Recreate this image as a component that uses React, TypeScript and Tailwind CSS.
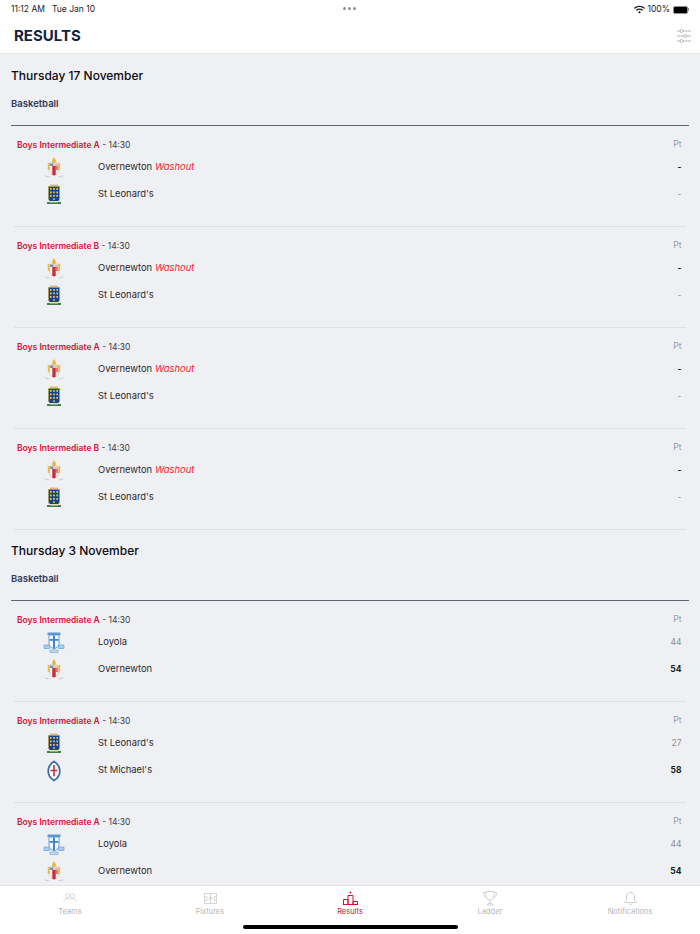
import { FaWifi } from "react-icons/fa";

type Team = "overnewton" | "leonards" | "loyola" | "michaels";

type Match = {
  grade: string;
  home: Team;
  away: Team;
  homeScore: string;
  awayScore: string;
  washout?: boolean;
};

const teamNames: Record<Team, string> = {
  overnewton: "Overnewton",
  leonards: "St Leonard's",
  loyola: "Loyola",
  michaels: "St Michael's",
};

const washouts: Match[] = [
  { grade: "Boys Intermediate A", home: "overnewton", away: "leonards", homeScore: "-", awayScore: "-", washout: true },
  { grade: "Boys Intermediate B", home: "overnewton", away: "leonards", homeScore: "-", awayScore: "-", washout: true },
  { grade: "Boys Intermediate A", home: "overnewton", away: "leonards", homeScore: "-", awayScore: "-", washout: true },
  { grade: "Boys Intermediate B", home: "overnewton", away: "leonards", homeScore: "-", awayScore: "-", washout: true },
];

const played: Match[] = [
  { grade: "Boys Intermediate A", home: "loyola", away: "overnewton", homeScore: "44", awayScore: "54" },
  { grade: "Boys Intermediate A", home: "leonards", away: "michaels", homeScore: "27", awayScore: "58" },
  { grade: "Boys Intermediate A", home: "loyola", away: "overnewton", homeScore: "44", awayScore: "54" },
];

// School crests
const Crest = ({ team }: { team: Team }) => {
  if (team === "overnewton") {
    return (
      <svg width="22" height="22" viewBox="0 0 22 22">
        <path d="M11 0l2 3.500-.8 3h-2.400l-.8-3z" fill="#e3b93c" />
        <path d="M4.500 6.500c1-1 2.500-.5 2.500 1v6c-1.500 0-2.500-1-2.300-2.500l.3-1.500zM17.500 6.500c-1-1-2.500-.5-2.500 1v6c1.500 0 2.500-1 2.300-2.500l-.3-1.500z" fill="#e3bd4a" />
        <path d="M6.500 6h9v8c0 2-2.500 3.300-4.500 4.300-2-1-4.500-2.300-4.500-4.300z" fill="#f6f3ec" stroke="#c9b26a" strokeWidth="0.5" />
        <path d="M9.300 9h3.400v8.800l-1.700.6-1.700-.6z" fill="#cb2a40" />
        <path d="M7 6.500h3.500v2.500h-3.500z" fill="#7f8bb0" />
        <path d="M11.500 6.500h3.500v2.500h-3.500z" fill="#e8b9a8" />
        <path d="M12.700 9h2.300v4h-2.300z" fill="#cb2a40" opacity="0.6" />
        <path d="M1 18c2.500 1 4.500 1.400 6 1l-1 1.300c-2 .3-4-.4-5-2.300zM21 18c-2.500 1-4.500 1.400-6 1l1 1.300c2 .3 4-.4 5-2.300z" fill="#d0d2d8" />
      </svg>
    );
  }
  if (team === "leonards") {
    return (
      <svg width="22" height="22" viewBox="0 0 22 22">
        <path d="M7 0.500h8v2h-8z" fill="#e2b48a" />
        <path d="M5.500 2.500h11v12c0 1.500-1 2.500-2 3h-7c-1-.5-2-1.500-2-3z" fill="#17448c" stroke="#a89a4c" strokeWidth="0.8" />
        <g fill="#e8cf4f">
          <rect x="7" y="4" width="1.600" height="1.800" />
          <rect x="10.200" y="4" width="1.600" height="1.800" />
          <rect x="13.400" y="4" width="1.600" height="1.800" />
          <rect x="7" y="7.500" width="1.600" height="1.800" />
          <rect x="10.200" y="7.500" width="1.600" height="1.800" />
          <rect x="13.400" y="7.500" width="1.600" height="1.800" />
          <rect x="7" y="11" width="1.600" height="1.800" />
          <rect x="10.200" y="11" width="1.600" height="1.800" />
          <rect x="13.400" y="11" width="1.600" height="1.800" />
          <rect x="10.200" y="14.300" width="1.600" height="1.600" />
        </g>
        <path d="M4 18h14v2h-14z" fill="#3f7d4a" />
        <path d="M7 17h8v1.500h-8z" fill="#e6dfc8" />
      </svg>
    );
  }
  if (team === "loyola") {
    return (
      <svg width="22" height="22" viewBox="0 0 22 22">
        <path d="M4.500 0.500h13v2.500h-13z" fill="#5b9bd5" />
        <path d="M6 3h10v9c0 2-2 3.500-5 5-3-1.500-5-3-5-5z" fill="#f4f7fb" stroke="#4a8ccc" strokeWidth="0.8" />
        <path d="M10 3.500h2v13h-2zM6.500 7h9v1.800h-9z" fill="#3f86cc" />
        <path d="M1 13h5.500v3.500h-5.500zM15.500 13h5.500v3.500h-5.500z" fill="#a9cdec" stroke="#5b9bd5" strokeWidth="0.6" />
        <path d="M7 18h8v2.500h-8z" fill="#c3dbf1" stroke="#5b9bd5" strokeWidth="0.5" />
      </svg>
    );
  }
  return (
    <svg width="22" height="22" viewBox="0 0 22 22">
      <path d="M11 1.500c4 2.500 5.800 5.800 5.800 9.500s-1.800 7-5.800 9.500c-4-2.500-5.800-5.800-5.800-9.500s1.800-7 5.800-9.500z" fill="#fff" stroke="#3d6ea8" strokeWidth="1.800" />
      <path d="M10.200 5h1.600v4.700h2.700v1.600h-2.700v5h-1.600v-5h-2.700v-1.600h2.700z" fill="#c8283c" />
    </svg>
  );
};

const TeamRow = ({ team, score, washout, strong }: { team: Team; score: string; washout?: boolean; strong: boolean }) => (
  <div className="flex h-[27px] items-center">
    <div className="mr-[4px] flex w-[80px] justify-center">
      <Crest team={team} />
    </div>
    <div className="flex-1 text-[9.4px] text-[#2a2a2e]">
      {teamNames[team]}
      {washout && <span className="ml-[3px] italic text-[#f5222d]">Washout</span>}
    </div>
    <div className={`w-[30px] pr-[4.500px] text-right text-[8.500px] ${strong ? "font-bold text-[#1c1c1e]" : "text-[#8e8e93]"}`}>
      {score}
    </div>
  </div>
);

const MatchCard = ({ match }: { match: Match }) => {
  const homeWon = Number(match.homeScore) > Number(match.awayScore);
  return (
    <div className="mx-[3px] h-[101px] border-b border-[#dfe0e4]">
      <div className="flex h-[28px] items-end justify-between pb-[2.500px] pl-[3px]">
        <div className="text-[8.500px] text-[#3c3c43]">
          <span className="font-semibold text-[#d7123a]">{match.grade}</span> - 14:30
        </div>
        <div className="pb-[1px] pr-[4.500px] text-[8.500px] text-[#9a9aa0]">Pt</div>
      </div>
      <TeamRow team={match.home} score={match.homeScore} washout={match.washout} strong={match.washout ? true : homeWon} />
      <TeamRow team={match.away} score={match.awayScore} strong={match.washout ? false : !homeWon} />
    </div>
  );
};

const Section = ({ date, matches }: { date: string; matches: Match[] }) => (
  <section className="px-[11px]">
    <h2 className="h-[37px] pt-[12px] text-[12px] font-medium text-[#0b0b0f]">{date}</h2>
    <h3 className="flex h-[24px] items-center text-[9.500px] font-semibold text-[#2d3a58]">Basketball</h3>
    <div className="mt-[9px] border-t border-[#5d6574]" />
    {matches.map((m, i) => (
      <MatchCard key={i} match={m} />
    ))}
  </section>
);

const TabIcon = ({ name }: { name: string }) => {
  if (name === "Teams") {
    return (
      <svg width="14" height="10" viewBox="0 0 16 12" fill="none" stroke="#c6c7cb" strokeWidth="0.8">
        <circle cx="5" cy="3.500" r="2.600" />
        <circle cx="11" cy="3.500" r="2.600" />
        <path d="M0.500 11c.5-3 2-4.500 4.500-4.500 1.500 0 2.500.5 3 1.500M8 8c.5-1 1.500-1.500 3-1.500 2.500 0 4 1.500 4.500 4.500" />
      </svg>
    );
  }
  if (name === "Fixtures") {
    return (
      <svg width="13" height="11" viewBox="0 0 14 12" fill="none" stroke="#c6c7cb" strokeWidth="0.8">
        <rect x="0.500" y="0.500" width="13" height="11" />
        <path d="M7 0.500v11M0.500 4h2.500v4h-2.500M13.500 4h-2.500v4h2.500" />
        <circle cx="7" cy="6" r="1.500" />
      </svg>
    );
  }
  if (name === "Results") {
    return (
      <svg width="15" height="14" viewBox="0 0 15 14" fill="none" stroke="currentColor" strokeWidth="1">
        <path d="M0.500 13.500v-5h4.500v5M5 13.500v-9h5v9M10 13.500v-3h4.500v3M0 13.500h15" />
        <circle cx="7.500" cy="1.500" r="1" fill="currentColor" stroke="none" />
      </svg>
    );
  }
  if (name === "Ladder") {
    return (
      <svg width="14" height="15" viewBox="0 0 14 15" fill="none" stroke="#c6c7cb" strokeWidth="0.8">
        <path d="M3 0.500h8v4.500c0 2.500-2 4-4 4s-4-1.500-4-4zM3 1.500h-2.500c0 3 1 4.500 3 5M11 1.500h2.500c0 3-1 4.500-3 5M7 9v3.500M4 14h6l-1-1.500h-4z" />
      </svg>
    );
  }
  return (
    <svg width="13" height="15" viewBox="0 0 13 15" fill="none" stroke="#c6c7cb" strokeWidth="0.8">
      <path d="M6.500 1.500c-2.500 0-4 2-4 4.500v3l-2 2.500h12l-2-2.500v-3c0-2.500-1.500-4.500-4-4.500zM5 12.500c.3 1 .8 1.500 1.500 1.500s1.200-.5 1.500-1.500M6.500 0.500v1" />
    </svg>
  );
};

const tabs = ["Teams", "Fixtures", "Results", "Ladder", "Notifications"];

const App = () => {
  return (
    <div className="flex h-[934px] w-[700px] flex-col overflow-hidden bg-white font-['Inter',sans-serif]">
      {/* status bar */}
      <div className="relative flex h-[16px] items-end justify-between pl-[11px] pr-[11px] text-[8.500px] text-[#1c1c1e]">
        <div className="flex gap-[7px]">
          <span>11:12 AM</span>
          <span>Tue Jan 10</span>
        </div>
        <div className="absolute left-[343px] top-[7px] flex gap-[2px]">
          <span className="h-[3px] w-[3px] rounded-full bg-[#8e8e93]" />
          <span className="h-[3px] w-[3px] rounded-full bg-[#8e8e93]" />
          <span className="h-[3px] w-[3px] rounded-full bg-[#8e8e93]" />
        </div>
        <div className="flex items-center gap-[2px]">
          <FaWifi size={11} />
          <span>100%</span>
          <div className="ml-[1px] flex items-center">
            <div className="h-[8px] w-[15px] rounded-[2px] border border-[#8e8e93] bg-black" />
            <div className="h-[3px] w-[1px] bg-[#8e8e93]" />
          </div>
        </div>
      </div>

      {/* header */}
      <header className="flex h-[38px] shrink-0 items-center justify-between border-b border-[#e3e4e8] pl-[14px] pr-[9px] pt-[3px]">
        <h1 className="text-[15px] font-bold text-[#14233f]">RESULTS</h1>
        <svg width="14" height="14" viewBox="0 0 14 14" fill="none" stroke="#a2a4aa" strokeWidth="0.8">
          <path d="M0 2h3M6 2h8M0 7h7M10 7h4M0 12h3M6 12h8" />
          <circle cx="4.500" cy="2" r="1.500" />
          <circle cx="8.500" cy="7" r="1.500" />
          <circle cx="4.500" cy="12" r="1.500" />
        </svg>
      </header>

      <main className="min-h-0 flex-1 overflow-hidden bg-[#eff0f4] pt-[1px]">
        <Section date="Thursday 17 November" matches={washouts} />
        <Section date="Thursday 3 November" matches={played} />
      </main>

      {/* tab bar */}
      <nav className="relative h-[49px] shrink-0 border-t border-[#e3e4e8] bg-white">
        <div className="grid grid-cols-5 pt-[5px]">
          {tabs.map((t) => (
            <div key={t} className={`flex h-[26px] flex-col items-center justify-between text-[7.500px] ${t === "Results" ? "text-[#d7123a]" : "text-[#b4b5ba]"}`}>
              <div className="flex h-[15px] items-center">
                <TabIcon name={t} />
              </div>
              <span>{t}</span>
            </div>
          ))}
        </div>
        <div className="absolute bottom-[5px] left-[243px] h-[4px] w-[215px] rounded-full bg-black" />
      </nav>
    </div>
  );
};

export default App;
